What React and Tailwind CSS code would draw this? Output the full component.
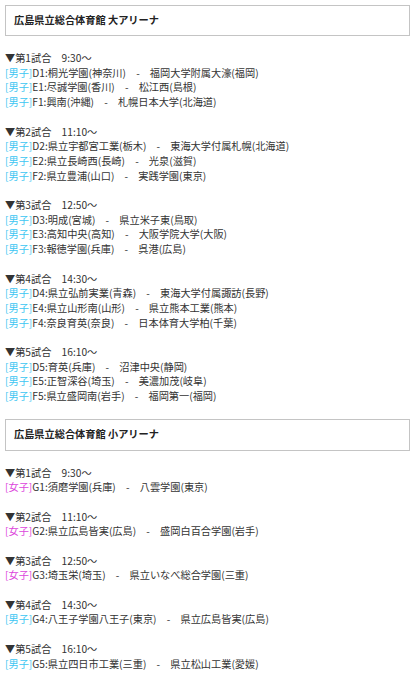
const M = "m";
const F = "f";

const big = [
  { h: "▼第1試合\u30009:30～", rows: [[M, "D1:桐光学園(神奈川)\u3000-\u3000福岡大学附属大濠(福岡)"], [M, "E1:尽誠学園(香川)\u3000-\u3000松江西(島根)"], [M, "F1:興南(沖縄)\u3000-\u3000札幌日本大学(北海道)"]] },
  { h: "▼第2試合\u300011:10～", rows: [[M, "D2:県立宇都宮工業(栃木)\u3000-\u3000東海大学付属札幌(北海道)"], [M, "E2:県立長崎西(長崎)\u3000-\u3000光泉(滋賀)"], [M, "F2:県立豊浦(山口)\u3000-\u3000実践学園(東京)"]] },
  { h: "▼第3試合\u300012:50～", rows: [[M, "D3:明成(宮城)\u3000-\u3000県立米子東(鳥取)"], [M, "E3:高知中央(高知)\u3000-\u3000大阪学院大学(大阪)"], [M, "F3:報徳学園(兵庫)\u3000-\u3000呉港(広島)"]] },
  { h: "▼第4試合\u300014:30～", rows: [[M, "D4:県立弘前実業(青森)\u3000-\u3000東海大学付属諏訪(長野)"], [M, "E4:県立山形南(山形)\u3000-\u3000県立熊本工業(熊本)"], [M, "F4:奈良育英(奈良)\u3000-\u3000日本体育大学柏(千葉)"]] },
  { h: "▼第5試合\u300016:10～", rows: [[M, "D5:育英(兵庫)\u3000-\u3000沼津中央(静岡)"], [M, "E5:正智深谷(埼玉)\u3000-\u3000美濃加茂(岐阜)"], [M, "F5:県立盛岡南(岩手)\u3000-\u3000福岡第一(福岡)"]] },
];

const small = [
  { h: "▼第1試合\u30009:30～", rows: [[F, "G1:須磨学園(兵庫)\u3000-\u3000八雲学園(東京)"]] },
  { h: "▼第2試合\u300011:10～", rows: [[F, "G2:県立広島皆実(広島)\u3000-\u3000盛岡白百合学園(岩手)"]] },
  { h: "▼第3試合\u300012:50～", rows: [[F, "G3:埼玉栄(埼玉)\u3000-\u3000県立いなべ総合学園(三重)"]] },
  { h: "▼第4試合\u300014:30～", rows: [[M, "G4:八王子学園八王子(東京)\u3000-\u3000県立広島皆実(広島)"]] },
  { h: "▼第5試合\u300016:10～", rows: [[M, "G5:県立四日市工業(三重)\u3000-\u3000県立松山工業(愛媛)"]] },
];

function Block({ b, last }) {
  return (
    <div>
      <div className="whitespace-pre">{b.h}</div>
      {b.rows.map(([g, t], i) => (
        <div key={i} className="whitespace-pre">
          {g === M ? (
            <span className="text-[#3cc6f2]">[男子]</span>
          ) : (
            <span className="text-[#dc45dc]">[女子]</span>
          )}
          {t}
        </div>
      ))}
      {!last && <div className="h-[14.7px]" />}
    </div>
  );
}

function Box({ title, h }) {
  return (
    <div className={`flex items-center border border-[#c4c4c4] pl-[8px] font-bold text-[#222] ${h}`}>
      {title}
    </div>
  );
}

export default function App() {
  return (
    <div
      className="bg-white px-[5px] pt-[5px] text-[10.2px] leading-[14.7px] text-[#333] h-[680px] overflow-hidden"
      style={{ fontFamily: '"Noto Sans CJK JP", "Noto Sans", sans-serif' }}
    >
      <Box title="広島県立総合体育館 大アリーナ" h="h-[31px]" />
      <div className="mt-[15px]">
        {big.map((b, i) => (
          <Block key={i} b={b} />
        ))}
      </div>
      <Box title="広島県立総合体育館 小アリーナ" h="h-[32px]" />
      <div className="mt-[15px]">
        {small.map((b, i) => (
          <Block key={i} b={b} last={i === small.length - 1} />
        ))}
      </div>
    </div>
  );
}
